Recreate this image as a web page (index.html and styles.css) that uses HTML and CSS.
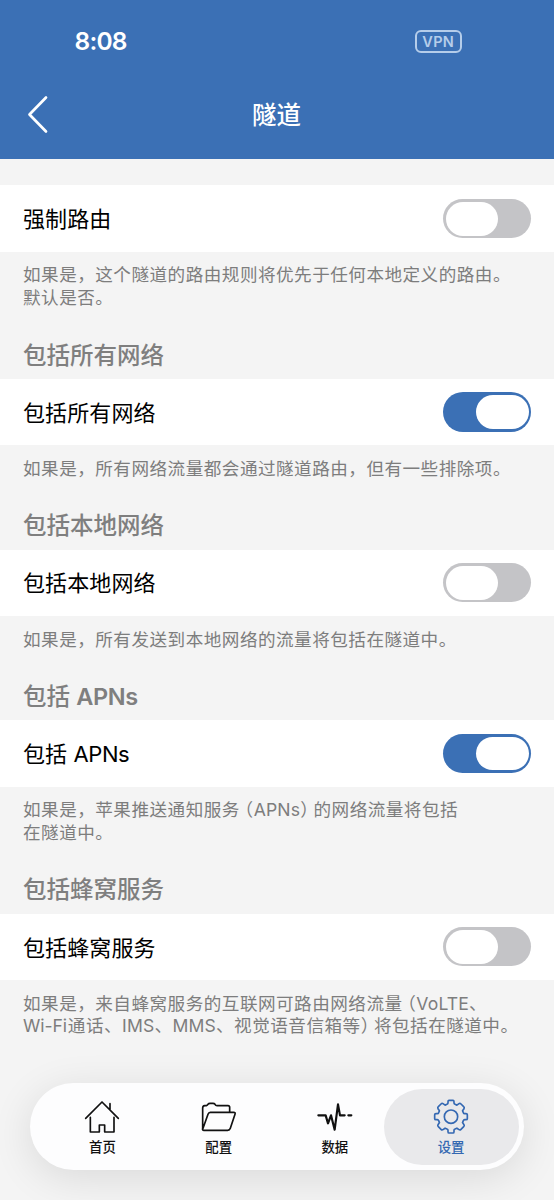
FILE: index.html
```html
<!DOCTYPE html>
<html lang="zh-CN">
<head>
<meta charset="utf-8">
<title>隧道</title>
<link rel="stylesheet" href="styles.css">
</head>
<body>
<div class="screen">
  <header class="header">
    <div class="status"><span class="time">8:08</span><span class="vpn">VPN</span></div>
    <div class="nav">
      <svg class="back" viewBox="0 0 24 40"><path d="M21 3.5 4.5 20.5 21 37.5"/></svg>
      <h1 class="title">隧道</h1>
      <span></span>
    </div>
  </header>
  <main class="content">
    <section>
      <div class="row"><span class="label">强制路由</span><span class="toggle"><i class="knob"></i></span></div>
      <p class="note">如果是，这个隧道的路由规则将优先于任何本地定义的路由。<br>默认是否。</p>
    </section>
    <section>
      <h2 class="heading">包括所有网络</h2>
      <div class="row"><span class="label">包括所有网络</span><span class="toggle on"><i class="knob"></i></span></div>
      <p class="note">如果是，所有网络流量都会通过隧道路由，但有一些排除项。</p>
    </section>
    <section>
      <h2 class="heading">包括本地网络</h2>
      <div class="row"><span class="label">包括本地网络</span><span class="toggle"><i class="knob"></i></span></div>
      <p class="note">如果是，所有发送到本地网络的流量将包括在隧道中。</p>
    </section>
    <section>
      <h2 class="heading">包括 <span class="latin">APNs</span></h2>
      <div class="row"><span class="label">包括 <span class="latin">APNs</span></span><span class="toggle on"><i class="knob"></i></span></div>
      <p class="note">如果是，苹果推送通知服务<span class="open">（</span><span class="latin">APNs</span><span class="close">）</span>的网络流量将包括<br>在隧道中。</p>
    </section>
    <section>
      <h2 class="heading">包括蜂窝服务</h2>
      <div class="row"><span class="label">包括蜂窝服务</span><span class="toggle"><i class="knob"></i></span></div>
      <p class="note">如果是，来自蜂窝服务的互联网可路由网络流量<span class="open">（</span><span class="latin">VoLTE</span>、<br><span class="latin wifi">Wi-Fi</span>通话、<span class="latin">IMS</span>、<span class="latin">MMS</span>、视觉语音信箱等<span class="close">）</span>将包括在隧道中。</p>
    </section>
  </main>
  <nav class="tabbar">
    <a class="tab">
      <svg class="icon" viewBox="0 0 108 108"><path d="M5 58 54 9 103 58M78 14V31M19 55V99H46V78H62V99H90V55"/></svg>
      <span>首页</span>
    </a>
    <a class="tab">
      <svg class="icon" viewBox="0 0 108 108"><path d="M5 91V27Q5 21 11 20H16Q19 19 21 16 23 13 27 13H36Q40 13 42 16 44 20 48 20H81Q86 20 86 25V39M5 91 21 46Q23 40 28 40H98Q104 40 102 46L88 88Q86 94 80 94H9Q3 94 5 88"/></svg>
      <span>配置</span>
    </a>
    <a class="tab">
      <svg class="icon pulse" viewBox="0 0 108 108"><path d="M4 49H26L33 73 42 49 53 92 63 16 69 49H83M94 49H103"/></svg>
      <span>数据</span>
    </a>
    <a class="tab active">
      <svg class="icon" viewBox="-54 -53 108 108"><path d="M-12-37Q-9-38-9-41V-45Q-9-49-6-49H6Q9-49 9-45V-41Q9-38 12-37L17.7-34.6 24-39Q27-41 30-38L38-30Q41-27 39-24L34.6-17.7 37-12Q38-9 41-9H45Q49-9 49-6V6Q49 9 45 9H41Q38 9 37 12L34.6 17.7 39 24Q41 27 38 30L30 38Q27 41 24 39L17.7 34.6 12 37Q9 38 9 41V45Q9 49 6 49H-6Q-9 49-9 45V41Q-9 38-12 37L-17.7 34.6-24 39Q-27 41-30 38L-38 30Q-41 27-39 24L-34.6 17.7-37 12Q-38 9-41 9H-45Q-49 9-49 6V-6Q-49-9-45-9H-41Q-38-9-37-12L-34.6-17.7-39-24Q-41-27-38-30L-30-38Q-27-41-24-39L-17.7-34.6Z"/><circle r="20"/></svg>
      <span>设置</span>
    </a>
  </nav>
</div>
</body>
</html>
```
FILE: styles.css
```css
* { box-sizing: border-box; }
body {
  margin: 0;
  background: #f4f4f4;
  font-family: Inter, "Noto Sans CJK SC", sans-serif;
}
h1, h2, p { margin: 0; }
.screen {
  display: flex;
  flex-direction: column;
  height: 1200px;
  overflow: hidden;
}
.header {
  height: 159.3px;
  flex: none;
  background: #3b70b5;
  color: #fff;
}
.status {
  display: flex;
  justify-content: space-between;
  align-items: center;
  height: 83px;
  padding: 0 92.5px 0 74.5px;
}
.time { padding-bottom: 1.5px; font-size: 24.5px; font-weight: 600; letter-spacing: -0.8px; }
.vpn {
  display: flex;
  align-items: center;
  justify-content: center;
  width: 46.5px;
  height: 23px;
  border: 2px solid #b5cdea;
  border-radius: 6px;
  color: #b5cdea;
  font-size: 14.5px;
  font-weight: 600;
  letter-spacing: 0.3px;
}
.nav {
  display: grid;
  grid-template-columns: 1fr auto 1fr;
  align-items: center;
  height: 62.5px;
  padding: 0 25px;
}
.back {
  width: 24px;
  height: 40px;
  fill: none;
  stroke: #fff;
  stroke-width: 2.7;
  stroke-linecap: round;
  stroke-linejoin: round;
}
.title { padding: 2px 1px 0 0; font-size: 24.5px; line-height: 36px; font-weight: 500; }
.content { flex: 1; padding-top: 26.2px; }
.row {
  display: flex;
  justify-content: space-between;
  align-items: center;
  height: 66.3px;
  padding: 0 22.7px 0 23px;
  background: #fff;
  color: #000;
  font-size: 22px;
  letter-spacing: 0.1px;
}
.label { padding-bottom: 2.6px; }
.row .latin { letter-spacing: -0.4px; }
.note {
  padding: 12.7px 23px 0.3px;
  color: #7d7d7d;
  font-size: 17.6px;
  line-height: 22.6px;
  letter-spacing: 0.48px;
  white-space: nowrap;
}
.note .latin { letter-spacing: 0.15px; }
.note .wifi { letter-spacing: -0.1px; margin-right: 1px; }
.open, .close { font-feature-settings: "halt"; }
.open { margin-left: 4.5px; }
.close { margin-right: 4px; }
.heading {
  padding: 30.7px 23px 8.2px;
  color: #7f7f7f;
  font-size: 23.5px;
  line-height: 30px;
  font-weight: 500;
}
.heading .latin { font-weight: 600; letter-spacing: -0.4px; }
.toggle {
  display: flex;
  width: 88.5px;
  height: 39.3px;
  padding: 2.7px;
  border-radius: 20px;
  background: #c4c4c7;
}
.toggle.on { justify-content: flex-end; background: #3b70b5; }
.knob {
  width: 52.5px;
  height: 33.9px;
  border-radius: 17px;
  background: #fff;
}
.tabbar {
  display: grid;
  grid-template-columns: repeat(4, 116.2px);
  justify-content: center;
  flex: none;
  width: 494.5px;
  height: 87px;
  margin: 0 0 30px 29.5px;
  border-radius: 43.5px;
  background: #fdfdfe;
  box-shadow: 0 8px 42px rgba(0, 0, 0, 0.11);
}
.tab {
  position: relative;
  display: flex;
  flex-direction: column;
  align-items: center;
  padding-top: 16.3px;
  color: #111;
  font-size: 13.4px;
  font-weight: 500;
  line-height: 20px;
}
.icon {
  position: relative;
  width: 36px;
  height: 36px;
  margin-bottom: 1.5px;
  fill: none;
  stroke: currentColor;
  stroke-width: 5;
  stroke-linecap: round;
  stroke-linejoin: round;
}
.pulse { stroke-width: 6.5; }
.tab span { position: relative; }
.active { color: #3468b2; }
.active::before {
  content: "";
  position: absolute;
  left: -9px;
  top: 6px;
  width: 135px;
  height: 75.5px;
  border-radius: 38px;
  background: #e9e9eb;
}
```
